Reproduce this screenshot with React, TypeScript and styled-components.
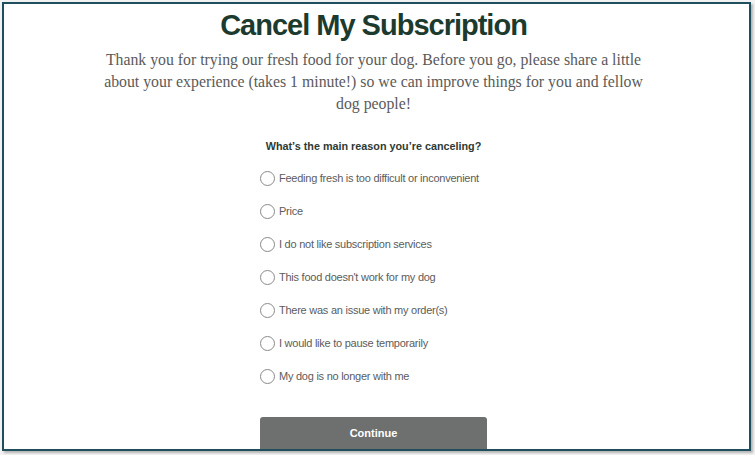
import React from "react";
import styled, { createGlobalStyle } from "styled-components";

const Global = createGlobalStyle`
  html, body { margin: 0; padding: 0; background: #ffffff; }
  body { width: 755px; height: 455px; overflow: hidden; }
`;

const Page = styled.div`
  width: 755px;
  height: 455px;
  padding: 2px 4px 4px 2px;
  box-sizing: border-box;
  background: #f2f2f2;
`;

const Frame = styled.div`
  height: 100%;
  box-sizing: border-box;
  border: 2px solid #1f4f5c;
  background: #ffffff;
  box-shadow: 2px 2px 2px rgba(0, 0, 0, 0.25);
  display: flex;
  flex-direction: column;
  align-items: center;
  overflow: hidden;
  padding-right: 6px;
`;

const Title = styled.h1`
  margin: 3px 0 0;
  font-family: "Liberation Sans", Arial, sans-serif;
  font-weight: 700;
  font-size: 29px;
  line-height: 36px;
  letter-spacing: -1px;
  color: #1c3b2e;
`;

const Intro = styled.p`
  margin: 6px 0 0;
  width: 545px;
  text-align: center;
  font-family: "Liberation Serif", "Times New Roman", serif;
  font-size: 15.8px;
  line-height: 22px;
  color: #5a5a5a;
`;

const Question = styled.div`
  margin-top: 25px;
  font-family: "Liberation Sans", Arial, sans-serif;
  font-weight: 700;
  font-size: 10.8px;
  color: #2e3b35;
`;

const Options = styled.div`
  margin-top: 17px;
  width: 227px;
  display: flex;
  flex-direction: column;
  gap: 15px;
`;

const Option = styled.label`
  display: flex;
  align-items: center;
  gap: 4px;
  height: 18px;
  font-family: "Liberation Sans", Arial, sans-serif;
  font-size: 11px;
  letter-spacing: -0.25px;
  color: #5c5c5c;
`;

const Radio = styled.span`
  width: 15px;
  height: 15px;
  box-sizing: border-box;
  border: 1px solid #8a8a8a;
  border-radius: 50%;
  flex: none;
`;

const Button = styled.button`
  margin-top: 32px;
  width: 227px;
  height: 36px;
  flex: none;
  border: none;
  border-radius: 3px;
  background: #6e6f6f;
  color: #ffffff;
  font-family: "Liberation Sans", Arial, sans-serif;
  font-weight: 700;
  font-size: 11px;
  padding: 0 0 4px;
`;

const reasons = [
  "Feeding fresh is too difficult or inconvenient",
  "Price",
  "I do not like subscription services",
  "This food doesn't work for my dog",
  "There was an issue with my order(s)",
  "I would like to pause temporarily",
  "My dog is no longer with me",
];

export default function App() {
  return (
    <>
      <Global />
      <Page>
        <Frame>
          <Title>Cancel My Subscription</Title>
          <Intro>
            Thank you for trying our fresh food for your dog. Before you go, please share a little
            about your experience (takes 1 minute!) so we can improve things for you and fellow dog
            people!
          </Intro>
          <Question>What’s the main reason you’re canceling?</Question>
          <Options>
            {reasons.map((r) => (
              <Option key={r}>
                <Radio />
                {r}
              </Option>
            ))}
          </Options>
          <Button>Continue</Button>
        </Frame>
      </Page>
    </>
  );
}
